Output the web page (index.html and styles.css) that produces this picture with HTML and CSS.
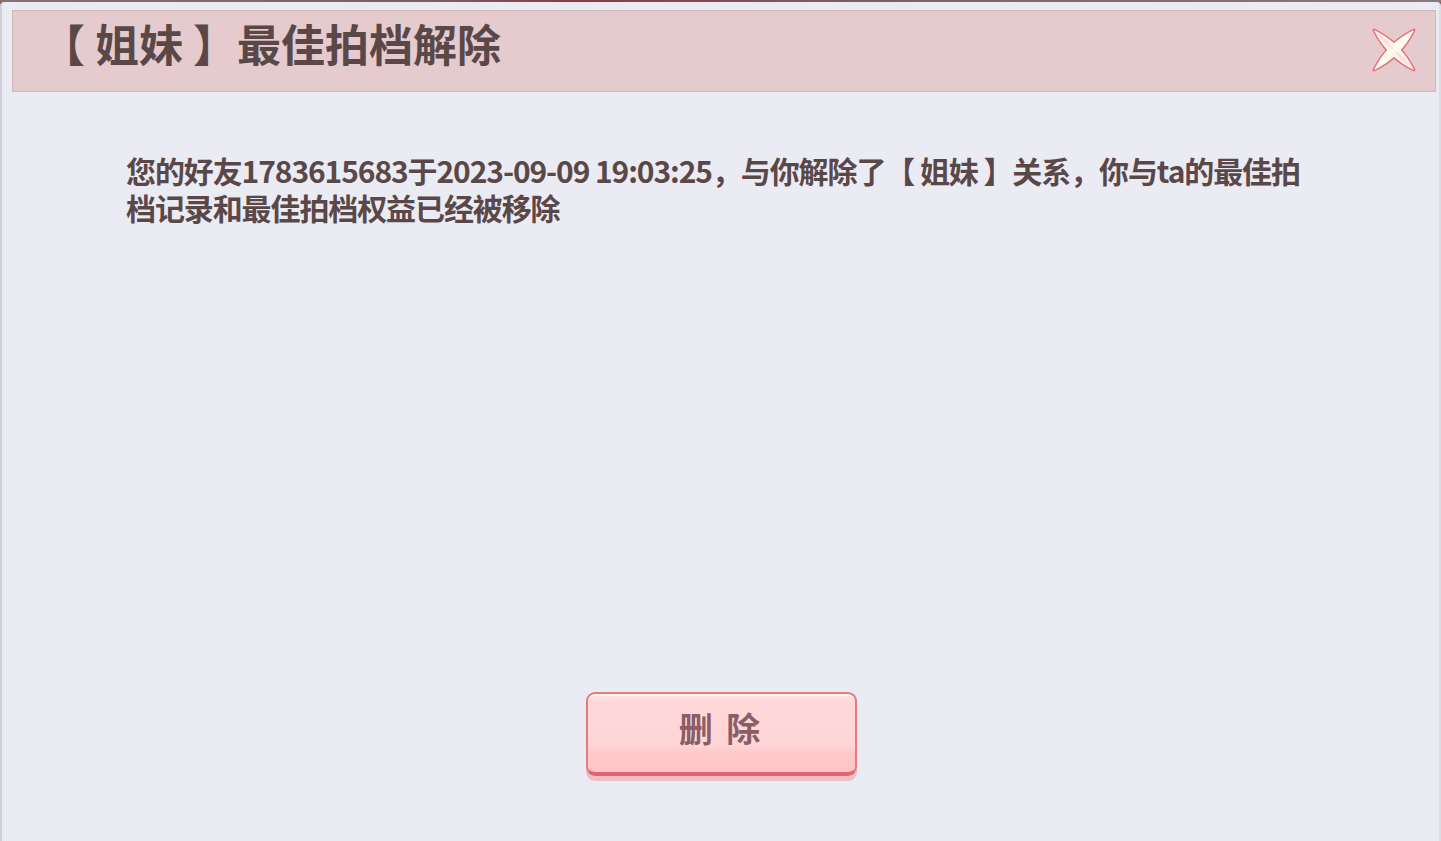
FILE: index.html
```html
<!DOCTYPE html>
<html lang="zh-CN">
<head>
<meta charset="utf-8">
<title>最佳拍档解除</title>
<link rel="stylesheet" href="styles.css">
</head>
<body>
<div class="topstrip"></div>
<div class="panel">
  <div class="header">
    <h1 class="title">【 姐妹 】最佳拍档解除</h1>
    <button class="close" aria-label="关闭">
      <svg width="48" height="48" viewBox="-24 -24 48 48">
        <g stroke="#e6727c" stroke-width="3" fill="#e6727c" stroke-linejoin="round">
          <path d="M-20 -20 Q7 -7 20 20 Q-7 7 -20 -20 Z"/>
          <path d="M20 -20 Q7 7 -20 20 Q-7 -7 20 -20 Z"/>
        </g>
        <g fill="#fffaf0">
          <path d="M-20 -20 Q7 -7 20 20 Q-7 7 -20 -20 Z"/>
          <path d="M20 -20 Q7 7 -20 20 Q-7 -7 20 -20 Z"/>
        </g>
        <g fill="#fbdcdc" opacity="0.9">
          <path d="M-19 -19 Q-4 -9 0 0 Q-9 -4 -19 -19 Z"/>
          <path d="M19 19 Q4 9 0 0 Q9 4 19 19 Z"/>
        </g>
      </svg>
    </button>
  </div>
  <p class="message">您的好友1783615683于2023-09-09 19:03:25，与你解除了【 姐妹 】关系，你与ta的最佳拍<br>档记录和最佳拍档权益已经被移除</p>
  <div class="actions">
    <button class="delete-btn"><span class="btn-label">删 除</span></button>
  </div>
</div>
</body>
</html>
```

FILE: styles.css
```css
* { box-sizing: border-box; }
html, body {
  margin: 0;
  padding: 0;
  width: 1441px;
  height: 841px;
  overflow: hidden;
}
body {
  background: #6e5a5c;
  font-family: "Noto Sans CJK SC", "Noto Sans", sans-serif;
}
.topstrip {
  height: 2px;
  background: linear-gradient(90deg, #8a7072 0%, #7a5e60 30%, #8c3a40 40%, #7a6062 60%, #8a7a7c 100%);
}
.panel {
  height: 839px;
  background: #ebebf4;
  border-left: 2px solid #cfcfd8;
  border-right: 2px solid #dcdce4;
  border-top-left-radius: 4px;
  border-top-right-radius: 4px;
  display: flex;
  flex-direction: column;
}
.header {
  margin: 8px 3px 0 10px;
  height: 82px;
  background: #e5cbce;
  border: 1px solid #d2b8bb;
  display: flex;
  align-items: center;
  justify-content: space-between;
  padding: 0 17px 0 28px;
}
.title {
  margin: 0 0 16px 0;
  font-size: 44px;
  font-weight: 700;
  color: #5a4848;
  letter-spacing: 0;
  line-height: 1;
}
.close {
  border: 0;
  background: transparent;
  padding: 0;
  width: 48px;
  height: 48px;
  margin-top: -2px;
  cursor: pointer;
}
.close svg { display: block; }
.message {
  margin: 60px 0 0 124px;
  white-space: nowrap;
  font-size: 30px;
  line-height: 37px;
  font-weight: 700;
  color: #5a4848;
  letter-spacing: -1.1px;
}
.actions {
  margin-top: auto;
  margin-bottom: 65px;
  display: flex;
  justify-content: center;
}
.delete-btn {
  width: 271px;
  height: 84px;
  margin-left: 1px;
  border: 2px solid #e67a7c;
  border-bottom: 4px solid #e2646c;
  border-radius: 9px;
  background: linear-gradient(180deg, #ffe4e3 0%, #ffd7d8 12%, #ffd6d8 66%, #ffcacd 74%, #ffc3c6 100%);
  box-shadow: 0 5px 0 #ebbfc4, inset 0 2px 0 #fff3ee;
  display: flex;
  align-items: center;
  justify-content: center;
  padding: 0 0 10px 0;
  cursor: pointer;
}
.btn-label {
  font-family: "Noto Sans CJK SC", sans-serif;
  font-size: 34px;
  font-weight: 700;
  color: #8b5d66;
  letter-spacing: 3px;
  line-height: 1;
}
```
